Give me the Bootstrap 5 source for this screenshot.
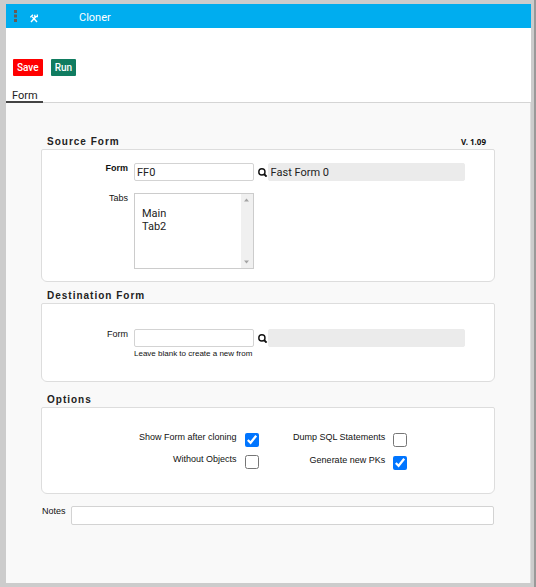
<!DOCTYPE html>
<html lang="en">
<head>
<meta charset="utf-8">
<meta name="viewport" content="width=device-width, initial-scale=1">
<title>Cloner</title>
<link href="https://cdn.jsdelivr.net/npm/bootstrap@5.3.0/dist/css/bootstrap.min.css" rel="stylesheet">
<style>
  body { background: #ccc; border-right: 2px solid #999; padding: 4px 3px 4px 6px; font: 11px/14px Roboto, Arial, sans-serif; color: #222; }
  .app-bar { background: #00adef; height: 24px; padding: 4px 0 0 7px; }
  .app-bar h1 { font-size: 11px; line-height: 20px; padding-left: 41px; }
  .toolbar-area { padding: 31px 7px 14px; gap: 8px; }
  .toolbar-area .btn { --bs-btn-padding-x: 4px; --bs-btn-padding-y: 0; --bs-btn-font-size: 10px; --bs-btn-border-width: 0; --bs-btn-border-radius: 1px; --bs-btn-color: #fff; line-height: 17px; font-weight: 500; }
  .btn-save { --bs-btn-bg: #f00; }
  .btn-run { --bs-btn-bg: #107c60; }
  .tab-strip { border-bottom: 1px solid #d5d5d5; }
  .tab-strip .nav-link { padding: 0 5px 0 6px; line-height: 11px; color: #222; border-bottom: 2px solid #444; margin-bottom: -1px; }
  .sheet { background: #f9f9f9; padding: 32px 35px 0; border-right: 1px solid #ddd; }
  .section-title { font: bold 10px/14px "Liberation Sans", Arial, sans-serif; letter-spacing: 1px; padding-left: 6px; }
  .version { font: bold 8px/14px "Noto Sans", sans-serif; padding-right: 9px; color: #111; }
  .panel { background: #fff; border: 1px solid #ddd; border-radius: 2px 2px 6px 6px; }
  .panel-source { padding: 13px 35px 12px 0; margin-bottom: 7px; }
  .panel-dest { padding: 25px 35px 21px 0; margin-bottom: 11px; }
  .panel-options { padding: 24px 0 15px; margin-bottom: 12px; }
  .field-grid { display: grid; grid-template-columns: 86px minmax(0, 120fr) 14px minmax(0, 198fr); }
  .field-label { font: 9px/11px "Liberation Sans", Arial, sans-serif; color: #111; }
  .field-grid .field-label { text-align: right; }
  .field-grid > :nth-child(n+2) { margin-left: 6px; margin-right: -6px; }
  .text-field { display: block; width: 100%; height: 18px; border: 1px solid #d3d3d3; border-radius: 2px; padding: 0 2px; background: #fff; color: #222; font-size: 11px; }
  .text-field:read-only { background: #ebebeb; border-color: #ebebeb; }
  .list-frame { height: 76px; border: 1px solid #ccc; margin-top: 12px; }
  .list-frame select { border: 0; outline: 0; padding: 13px 7px 0; overflow: hidden; font-size: 11px; color: #222; background: #fff; min-width: 0; }
  .list-frame option { padding: 0; min-height: 12px; line-height: 12px; }
  .scroll-track { width: 12px; background: #f0f0f0; padding: 4px 0; }
  .tabs-label { margin-top: 12px; }
  .hint { font: 8px/12px "Liberation Sans", Arial, sans-serif; margin-top: 1px; color: #111; }
  .option-grid { display: grid; grid-template-columns: 217fr 163fr 73fr; }
  .check-row { display: flex; justify-content: flex-end; gap: 8px; height: 22px; }
  .check-row input { width: 14px; height: 14px; margin: 1px 0 0; accent-color: #0075ff; }
  .option-grid > :nth-child(2) { margin-right: 14px; }
  .option-grid > :nth-child(2) .check-row { height: 23px; }
  .notes-row { padding: 0 1px; }
  .notes-row .field-label { flex: 0 0 29px; }
  .notes-row .text-field { height: 19px; }
</style>
</head>
<body class="min-vh-100 d-flex flex-column">
<header class="app-bar d-flex align-items-center text-white">
  <button class="btn p-0 border-0 d-flex mb-1" type="button" aria-label="Menu">
    <svg width="5" height="12" viewBox="0 0 5 12"><path fill="#665b55" d="M1 0h3v3H1zM1 4.5h3v3H1zM1 9h3v3H1z"/></svg>
  </button>
  <button class="btn p-0 border-0 d-flex ms-2 ps-1" type="button" aria-label="Tools">
    <svg width="8" height="9" viewBox="0 0 8 9" fill="none" stroke="#fff"><path stroke-width="1.4" d="M2.2 2.7 7 8M5.8 2.7 1 8"/><path stroke-width="1.3" d="M.3 3.3 3 .7M4.8.7v2h2.5V.5"/></svg>
  </button>
  <h1 class="m-0 fw-normal">Cloner</h1>
</header>
<div class="bg-white">
  <div class="toolbar-area d-flex">
    <button class="btn btn-save" type="button">Save</button>
    <button class="btn btn-run" type="button">Run</button>
  </div>
  <nav class="tab-strip nav"><a class="nav-link" href="#form">Form</a></nav>
</div>
<main class="sheet flex-grow-1" id="form">
  <form>
    <div class="d-flex justify-content-between">
      <h2 class="section-title m-0">Source Form</h2><span class="version">V. 1.09</span>
    </div>
    <section class="panel panel-source">
      <div class="field-grid">
        <label class="field-label fw-bold" for="src">Form</label>
        <div><input class="text-field" id="src" type="text" value="FF0"></div>
        <button class="btn p-0 border-0 d-flex align-items-center justify-content-end" type="button" aria-label="Find source form">
          <svg width="10" height="9" viewBox="0 0 10 9" fill="none" stroke="#111"><circle cx="3.9" cy="3.9" r="3.1" stroke-width="1.4"/><path stroke-width="1.9" d="m6 6 2.6 2.6"/></svg>
        </button>
        <div><input class="text-field" type="text" value="Fast Form 0" readonly aria-label="Source form description"></div>
      </div>
      <div class="field-grid">
        <label class="field-label tabs-label" for="tabs">Tabs</label>
        <div class="list-frame d-flex">
          <select class="flex-grow-1" id="tabs" multiple size="4"><option>Main</option><option>Tab2</option></select>
          <div class="scroll-track d-flex flex-column justify-content-between align-items-center" aria-hidden="true">
            <svg width="5" height="4" viewBox="0 0 5 4"><path fill="#a3a3a3" d="M0 3.5 2.5.5 5 3.5z"/></svg>
            <svg width="5" height="4" viewBox="0 0 5 4"><path fill="#a3a3a3" d="M0 .5h5L2.5 3.5z"/></svg>
          </div>
        </div>
      </div>
    </section>
    <h2 class="section-title m-0">Destination Form</h2>
    <section class="panel panel-dest">
      <div class="field-grid">
        <label class="field-label" for="dst">Form</label>
        <div><input class="text-field" id="dst" type="text"></div>
        <button class="btn p-0 border-0 d-flex align-items-center justify-content-end" type="button" aria-label="Find destination form">
          <svg width="10" height="9" viewBox="0 0 10 9" fill="none" stroke="#111"><circle cx="3.9" cy="3.9" r="3.1" stroke-width="1.4"/><path stroke-width="1.9" d="m6 6 2.6 2.6"/></svg>
        </button>
        <div><input class="text-field" type="text" readonly aria-label="Destination form description"></div>
      </div>
      <div class="field-grid"><span></span><div class="hint text-nowrap">Leave blank to create a new from</div></div>
    </section>
    <h2 class="section-title m-0">Options</h2>
    <section class="panel panel-options">
      <div class="option-grid">
        <div>
          <div class="check-row"><label class="field-label" for="o1">Show Form after cloning</label><input id="o1" type="checkbox" checked></div>
          <div class="check-row"><label class="field-label" for="o2">Without Objects</label><input id="o2" type="checkbox"></div>
        </div>
        <div>
          <div class="check-row"><label class="field-label" for="o3">Dump SQL Statements</label><input id="o3" type="checkbox"></div>
          <div class="check-row"><label class="field-label" for="o4">Generate new PKs</label><input id="o4" type="checkbox" checked></div>
        </div>
      </div>
    </section>
    <div class="notes-row d-flex">
      <label class="field-label" for="notes">Notes</label>
      <input class="text-field flex-grow-1" id="notes" type="text">
    </div>
  </form>
</main>
<script src="https://cdn.jsdelivr.net/npm/bootstrap@5.3.0/dist/js/bootstrap.bundle.min.js"></script>
</body>
</html>
